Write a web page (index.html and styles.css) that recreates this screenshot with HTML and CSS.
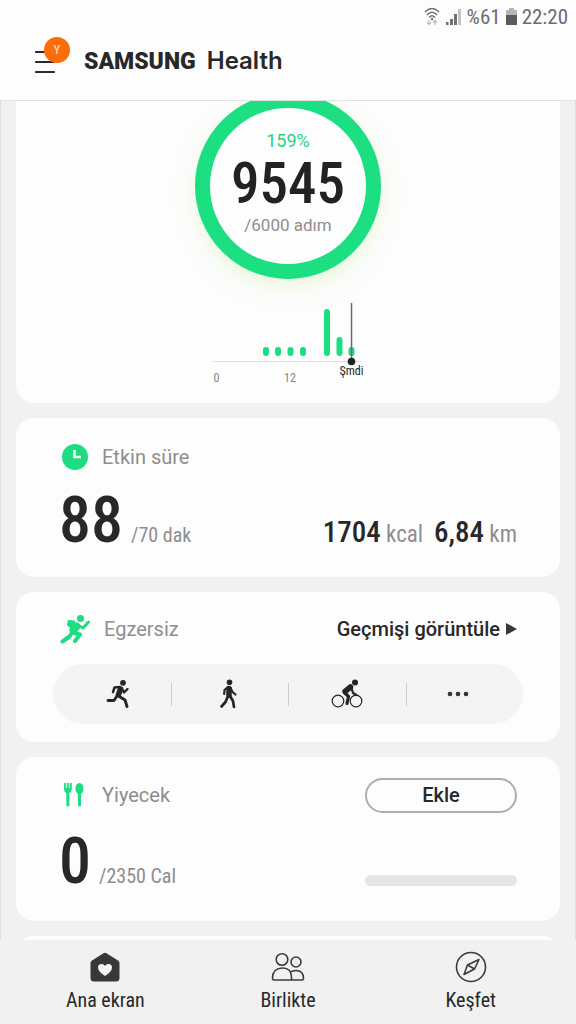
FILE: index.html
```html
<!DOCTYPE html>
<html lang="tr">
<head>
<meta charset="utf-8">
<meta name="viewport" content="width=device-width, initial-scale=1">
<title>Samsung Health</title>
<link rel="stylesheet" href="styles.css">
</head>
<body>
<header class="top">
  <div class="status">
    <svg class="status-wifi" width="16" height="20" viewBox="0 0 16 20" fill="none" stroke="#707070" stroke-width="1.6" stroke-linecap="round"><path d="M1.500 4.500Q8-1.500 14.500 4.500M3.500 7.500Q8 3 12.500 7.500M5.500 10Q8 7.500 10.500 10"/><circle cx="8" cy="12" r=".5"/><path stroke="#b8b8b8" stroke-width="1.200" d="M5 13.500v4M3.500 16l1.500 1.500L6.500 16M11 17.500v-4M9.500 15l1.500-1.500 1.500 1.500"/></svg>
    <svg width="17" height="17" viewBox="0 0 17 17"><path fill="#c4c4c4" d="M13 0h3v16h-3z"/><path fill="#707070" d="M1 13h2.500v3H1zM5 10h3v6H5zM9 5h3v11H9z"/></svg>
    <span class="status-text">%61</span>
    <svg width="11" height="18" viewBox="0 0 11 18"><path fill="#b5b5b5" d="M3 0h5v2h3v6H0V2h3z"/><path fill="#5c5c5c" d="M0 7h11v10H0z"/></svg>
    <span class="status-text">22:20</span>
  </div>
  <div class="brand">
    <button class="menu" aria-label="Menü">
      <svg width="20" height="24" viewBox="0 0 20 24" stroke="#2b2b2b" stroke-width="2.200" stroke-linecap="round"><path d="M1 2h18M1 12h18M1 22h18"/></svg>
      <span class="avatar">Y</span>
    </button>
    <h1 class="title"><span class="title-maker">SAMSUNG</span> <span class="title-app">Health</span></h1>
  </div>
</header>

<main class="feed">
  <section class="card steps">
    <div class="ring">
      <span class="ring-percent">159%</span>
      <strong class="ring-count">9545</strong>
      <span class="ring-goal">/6000 adım</span>
    </div>
    <svg class="chart" width="156" height="84" viewBox="0 0 156 84" role="img" aria-label="Saatlik adımlar">
      <path d="M2 60.500h150" stroke="#e2e2e2"/>
      <g stroke="#1cdd80" stroke-width="6" stroke-linecap="round"><path d="M56 49v3M68 49v3M80.500 49v3M93 49v3M117 11v41M129.500 39v13M141.500 49v3"/></g>
      <path d="M141.500 2v58" stroke="#6b6b6b" stroke-width="1.500"/>
      <circle cx="141.500" cy="60.500" r="3.800" fill="#222"/>
      <g class="chart-labels"><text x="6.500" y="81">0</text><text x="80" y="81">12</text><text class="chart-now" x="141.500" y="74">Şmdi</text></g>
    </svg>
  </section>

  <section class="card active">
    <div class="card-head">
      <svg class="icon" width="30" height="30" viewBox="0 0 30 30"><circle cx="15" cy="15" r="13" fill="#1ddc81"/><path d="M14.500 8v7H21" fill="none" stroke="#fff" stroke-width="2.600"/></svg>
      <h2 class="card-title">Etkin süre</h2>
    </div>
    <div class="values">
      <p class="value"><strong class="big">88</strong><span class="goal">/70 dak</span></p>
      <p class="facts"><span><b>1704</b> kcal</span><span><b>6,84</b> km</span></p>
    </div>
  </section>

  <section class="card exercise">
    <div class="card-head">
      <svg class="icon" width="30" height="30" viewBox="0 0 30 30" fill="none" stroke="#1ddc81" stroke-linecap="round" stroke-linejoin="round"><circle cx="20.500" cy="4.500" r="3.600" fill="#1ddc81" stroke="none"/><path d="M16.500 12.500 13.500 16" stroke-width="8"/><path d="m18.500 11.500 4.500 2.500 5.500-6" stroke-width="3"/><path d="M14 8 9 7.500 8.500 11l2 1.500z" stroke-width="2.800" fill="#1ddc81"/><path d="M12 18.500 9.500 22.500l-7 5M14 19l6 1.500-5 6.500" stroke-width="4"/></svg>
      <h2 class="card-title">Egzersiz</h2>
      <a class="history" href="#history">Geçmişi görüntüle<svg width="11" height="12" viewBox="0 0 11 12"><path d="M0 0 11 6 0 12z" fill="#383838"/></svg></a>
    </div>
    <div class="sports">
      <button class="sport" aria-label="Koşu"><svg width="24" height="30" viewBox="0 0 24 30" fill="none" stroke="#252525" stroke-linecap="round" stroke-linejoin="round"><circle cx="17" cy="3.800" r="2.900" fill="#252525" stroke="none"/><path d="M14.500 10 12.500 15.500" stroke-width="5.500"/><path d="M14 8 8.500 8.500 7 13M15.500 9l2.500 4.500L21.500 10" stroke-width="2.400"/><path d="m11 17-3 4.500-6 0M12.500 17l6.500 4 2 6.500" stroke-width="2.900"/></svg></button>
      <button class="sport" aria-label="Yürüyüş"><svg width="24" height="30" viewBox="0 0 24 30" fill="none" stroke="#252525" stroke-linecap="round" stroke-linejoin="round"><circle cx="12.500" cy="3.200" r="2.800" fill="#252525" stroke="none"/><path d="M12 9.500v6.500" stroke-width="5.500"/><path d="M11 8 7.500 11l-.3 4M13.500 9l2 4 3 2.500" stroke-width="2.200"/><path d="m11 17-2.500 6-4 4.500M13 17l3 5 1 6" stroke-width="2.700"/></svg></button>
      <button class="sport" aria-label="Bisiklet"><svg width="32" height="30" viewBox="0 0 32 30" fill="none" stroke="#252525" stroke-linecap="round" stroke-linejoin="round"><circle cx="24" cy="3.600" r="3" fill="#252525" stroke="none"/><circle cx="7" cy="22" r="5.800" stroke-width="1.200"/><circle cx="25" cy="22" r="5.800" stroke-width="1.200"/><path d="m19.500 8-5.500 4.500" stroke-width="5.500"/><path d="m20.500 9 1.500 5 3.500 2" stroke-width="2.200"/><path d="m13.500 13.500 4 4-1.500 7" stroke-width="3.200"/></svg></button>
      <button class="sport" aria-label="Daha fazla"><svg width="24" height="6" viewBox="0 0 24 6" fill="#333"><circle cx="4" cy="3" r="2.300"/><circle cx="12" cy="3" r="2.300"/><circle cx="20" cy="3" r="2.300"/></svg></button>
    </div>
  </section>

  <section class="card food">
    <div class="card-head">
      <svg class="icon" width="30" height="30" viewBox="0 0 30 30" fill="#1ddc81"><path d="M4 3h1.800v5h1V3h2v5h1V3h2v6q0 3-2.400 4v12q0 1.500-1.600 1.500T6.300 25V13Q4 12 4 9z"/><path d="M19.500 3q4 .5 4 5.500 0 4-2.500 5.500V25q0 1.500-1.500 1.500T18 25V14Q15.500 12.500 15.500 8.500q0-5 4-5.500z"/></svg>
      <h2 class="card-title">Yiyecek</h2>
      <button class="add">Ekle</button>
    </div>
    <div class="values">
      <p class="value"><strong class="big">0</strong><span class="goal">/2350 Cal</span></p>
      <div class="bar" role="progressbar" aria-label="Kalori" aria-valuenow="0" aria-valuemin="0" aria-valuemax="2350"></div>
    </div>
  </section>

  <section class="card next" aria-hidden="true"></section>
</main>

<nav class="tabs">
  <a class="tab" href="#home"><svg width="32" height="32" viewBox="0 0 32 32"><path d="M14.500 2.200q1.500-1 3 0L29 9.500q1.500 1 1.500 2.500v15q0 3.500-3.500 3.500H5Q1.500 30.500 1.500 27V12q0-1.500 1.500-2.500z" fill="#383838"/><path d="M16 25q-7-4.500-7-8.500Q9 13 12.500 13q2.500 0 3.500 2 1-2 3.500-2 3.500 0 3.500 3.500 0 4-7 8.500z" fill="#f4f4f4"/></svg>Ana ekran</a>
  <a class="tab" href="#together"><svg width="34" height="32" viewBox="0 0 34 32" fill="none" stroke="#3b3b3b" stroke-width="1.600" stroke-linejoin="round"><circle cx="11" cy="8.500" r="5.800"/><circle cx="25" cy="11" r="5"/><path d="M20 29H3q-1.500 0-1.500-2 0-9.500 9.500-10T20.500 27v2H31q1.500 0 1.500-1.500 0-8-7.500-8-4 0-6 2"/></svg>Birlikte</a>
  <a class="tab" href="#discover"><svg width="32" height="32" viewBox="0 0 32 32" fill="none" stroke="#3b3b3b" stroke-width="1.600" stroke-linejoin="round"><circle cx="16" cy="16" r="14.500"/><path d="M24 8.500 19.500 18 9 23.500 12.500 14zM12.500 14l7 4"/></svg>Keşfet</a>
</nav>
</body>
</html>
```
FILE: styles.css
```css
* { box-sizing: border-box; }

body {
  margin: 0;
  height: 100vh;
  display: flex;
  flex-direction: column;
  background: #f1f1f1;
  color: #282828;
  font-family: "Roboto Condensed", Roboto, sans-serif;
}

h1, h2, p { margin: 0; font-weight: 400; }
button { border: 0; padding: 0; background: none; color: inherit; font-family: inherit; }
a { color: inherit; text-decoration: none; }
svg { display: block; flex: none; }

.top {
  flex: none;
  background: #fdfdfd;
  border-bottom: 1px solid #e3e3e3;
}

.status {
  display: flex;
  justify-content: flex-end;
  align-items: center;
  gap: 5px;
  height: 34px;
  padding-right: 8px;
  color: #6c6c6c;
}
.status-text { font-size: 21px; line-height: 24px; }

.brand {
  display: flex;
  align-items: center;
  gap: 29px;
  height: 66px;
  padding: 0 35px 12px;
}
.menu { position: relative; padding-top: 1px; }
.avatar {
  position: absolute;
  left: 9px;
  top: -12px;
  width: 26px;
  height: 26px;
  border-radius: 50%;
  background: #fb6d0b;
  color: #ffe3cc;
  font-size: 13px;
  line-height: 26px;
}
.title { display: flex; align-items: baseline; gap: 11px; line-height: 28px; }
.title-maker { font-family: Roboto, sans-serif; font-size: 23px; font-weight: 900; }
.title-app { font-family: Inter, sans-serif; font-size: 24px; font-weight: 600; }

.feed {
  flex: 1;
  min-height: 0;
  overflow: hidden;
  display: flex;
  flex-direction: column;
  gap: 15px;
  padding: 0 15px;
  border: solid #dedede;
  border-width: 0 1px;
}

.card {
  flex: none;
  padding: 0 43px;
  border-radius: 18px;
  background: #fdfdfd;
}
.card-head { display: flex; align-items: center; height: 38px; padding-left: 1px; }
.card-title {
  margin-left: 12px;
  font-family: Roboto, sans-serif;
  font-size: 20px;
  line-height: 24px;
  color: #8e8e8e;
}

.steps {
  display: flex;
  flex-direction: column;
  align-items: center;
  border-radius: 0 0 18px 18px;
  padding-bottom: 18px;
}
.ring {
  display: flex;
  flex-direction: column;
  align-items: center;
  width: 186px;
  height: 186px;
  margin-top: -8px;
  padding-top: 22px;
  border: 15px solid #1bdf80;
  border-radius: 50%;
  box-shadow: 0 8px 20px #d9f5bd80;
}
.ring-percent { font-family: Roboto, sans-serif; font-size: 18px; line-height: 22px; color: #25d384; }
.ring-count { font-size: 57px; line-height: 63px; font-weight: 500; color: #222; }
.ring-goal { font-family: Roboto, sans-serif; font-size: 17px; line-height: 20px; color: #8e8e8e; }
.chart { margin-top: 22px; }
.chart-labels { font-size: 12px; fill: #858585; text-anchor: middle; }
.chart-now { fill: #252525; }

.active { padding-top: 20px; padding-bottom: 17px; }
.values { display: flex; align-items: baseline; justify-content: space-between; margin-top: 6px; }
.value { display: flex; align-items: baseline; gap: 8px; }
.big { font-size: 64px; line-height: 78px; font-weight: 500; }
.goal { font-size: 20px; color: #8e8e8e; }
.facts { display: flex; gap: 11px; font-size: 23px; color: #8e8e8e; }
.facts b { font-size: 29px; font-weight: 500; color: #282828; }

.exercise { padding: 18px 37px; }
.exercise .card-head { padding: 0 6px 0 7px; }
.exercise .card-title { margin-left: 14px; }
.history {
  display: flex;
  align-items: center;
  gap: 6px;
  margin-left: auto;
  font-family: Roboto, sans-serif;
  font-size: 20px;
  line-height: 24px;
  font-weight: 500;
}
.sports {
  display: grid;
  grid-template-columns: repeat(4, 1fr);
  height: 60px;
  margin-top: 16px;
  border-radius: 30px;
  background: #f4f4f4;
}
.sport { display: flex; align-items: center; justify-content: center; }
.sport + .sport { background: linear-gradient(#cdcdcd, #cdcdcd) left center / 1px 23px no-repeat; }
.sport:first-child { padding-left: 12px; }
.sport:last-child { padding-right: 12px; }

.food { padding-top: 19px; padding-bottom: 20px; }
.food .values { margin-top: 9px; }
.add {
  width: 152px;
  height: 35px;
  margin-left: auto;
  border: 2px solid #adadad;
  border-radius: 18px;
  font-family: Roboto, sans-serif;
  font-size: 20px;
  font-weight: 500;
}
.bar {
  align-self: flex-end;
  width: 152px;
  height: 11px;
  margin-bottom: 15px;
  border-radius: 6px;
  background: #e5e5e5;
}

.next { height: 80px; }

.tabs {
  flex: none;
  display: grid;
  grid-template-columns: repeat(3, 1fr);
  height: 84px;
  padding: 11px 14px 0;
  background: #f1f1f1;
}
.tab {
  display: flex;
  flex-direction: column;
  align-items: center;
  gap: 5px;
  font-size: 20px;
  line-height: 24px;
}
```
